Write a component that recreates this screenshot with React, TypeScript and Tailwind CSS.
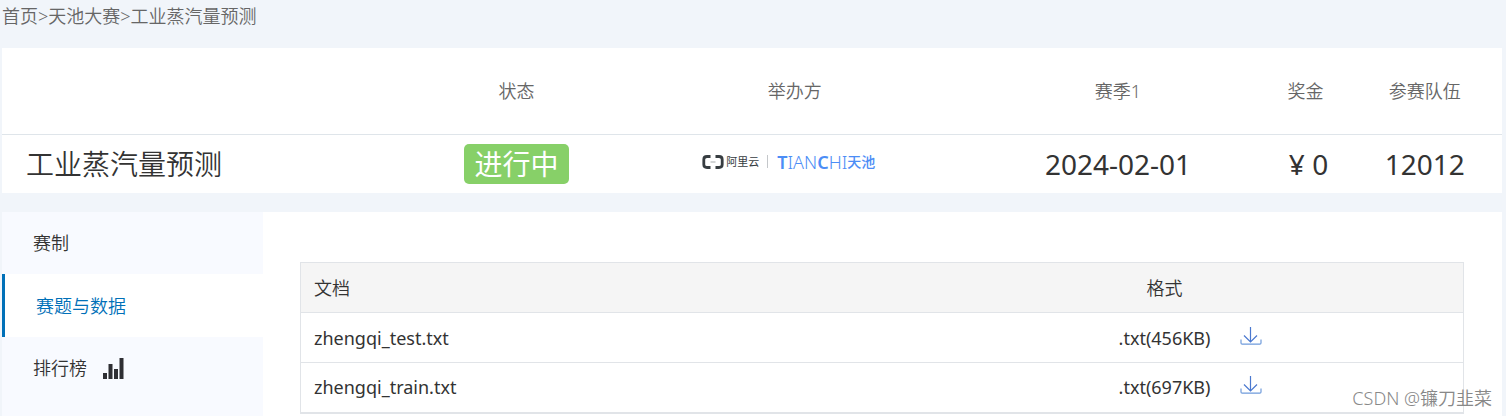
import React from "react";

const files = [
  { name: "zhengqi_test.txt", format: ".txt(456KB)" },
  { name: "zhengqi_train.txt", format: ".txt(697KB)" },
];

function BracketLogo() {
  return (
    <svg className="h-[14px] w-[22px]" viewBox="0 0 22 14" fill="none" aria-hidden="true">
      <path d="M8.500 1.500H5Q1.800 1.500 1.800 4.500V9.500Q1.800 12.500 5 12.500H8.500" stroke="#373d41" strokeWidth="2.8" />
      <path d="M13.500 1.500H17Q20.200 1.500 20.200 4.500V9.500Q20.200 12.500 17 12.500H13.500" stroke="#373d41" strokeWidth="2.8" />
      <path d="M8.500 7H13.500" stroke="#a5a9ab" strokeWidth="1" />
    </svg>
  );
}

function OrganizerLogo() {
  return (
    <div className="flex items-center justify-center whitespace-nowrap">
      <BracketLogo />
      <span className="ml-0.5 text-[11px] leading-4 text-[#373d41]">阿里云</span>
      <span className="mr-[9px] ml-2 h-[13px] w-px bg-[#c4c7ca]" />
      <span className="text-[18px] leading-4 font-light text-[#4c8df6]">
        <b className="font-semibold">T</b>IAN<b className="font-semibold">C</b>HI
      </span>
      <span className="text-[14px] leading-4 font-medium text-[#4c8df6]">天池</span>
    </div>
  );
}

function BarsIcon() {
  return (
    <svg className="h-[21px] w-[21px]" viewBox="0 0 21 21" fill="#2e2e33" aria-hidden="true">
      <path d="M0 15H4V21H0ZM5.500 6H9.500V21H5.500ZM11 11H15V21H11ZM16.500 0H20.500V21H16.500Z" />
    </svg>
  );
}

function DownloadIcon() {
  return (
    <svg className="h-[18px] w-[22px]" viewBox="0 0 22 18" fill="none" stroke="#4a78cf" aria-hidden="true">
      <path d="M10.500 0V15M4 8.500L10.500 15L17 8.500" strokeWidth="1.2" />
      <path d="M1 12.500V16Q1 17.200 2.200 17.200H19.800Q21 17.200 21 16V12.500" stroke="#6f9bdb" strokeWidth="1.2" />
    </svg>
  );
}

export default function App() {
  return (
    <div className="relative flex min-h-screen flex-col bg-[#f1f5fa] pr-1 pl-0.5 font-['Noto_Sans','Noto_Sans_CJK_SC',sans-serif] text-[18px] leading-6 text-[#333]">
      <nav aria-label="面包屑" className="flex h-12 items-start pt-1 font-[350] text-[#666]">
        <a href="#home">首页</a>
        <span>&gt;</span>
        <a href="#contests">天池大赛</a>
        <span>&gt;</span>
        <a href="#current">工业蒸汽量预测</a>
      </nav>

      <table className="w-full table-fixed bg-white text-center">
        <colgroup>
          <col className="w-[27.6%]" />
          <col className="w-[13.4%]" />
          <col className="w-[23.7%]" />
          <col className="w-[19.4%]" />
          <col className="w-[5.6%]" />
          <col className="w-[10.3%]" />
        </colgroup>
        <thead>
          <tr className="h-[86px] border-b border-[#dfe5ea] text-[#666]">
            <td />
            <th className="font-[350]">状态</th>
            <th className="font-[350]">举办方</th>
            <th className="font-[350]">赛季1</th>
            <th className="font-[350] whitespace-nowrap">奖金</th>
            <th className="font-[350]">参赛队伍</th>
          </tr>
        </thead>
        <tbody>
          <tr className="h-[59px] text-[28px] leading-10 whitespace-nowrap">
            <th className="pl-6 text-left font-[350]">工业蒸汽量预测</th>
            <td>
              <div className="flex justify-center">
                <span className="rounded-[5px] bg-[#87d068] px-[10px] text-white">进行中</span>
              </div>
            </td>
            <td className="pr-3 pb-1">
              <OrganizerLogo />
            </td>
            <td>2024-02-01</td>
            <td className="pl-1.5">¥ 0</td>
            <td>12012</td>
          </tr>
        </tbody>
      </table>

      <div className="mt-[19px] flex grow bg-white">
        <aside className="w-[261px] shrink-0 bg-[#f8faff]">
          <ul className="font-[350]">
            <li>
              <a href="#rules" className="flex h-[62px] items-center pl-[31px]">赛制</a>
            </li>
            <li>
              <a
                href="#data"
                aria-current="page"
                className="flex h-[63px] items-center border-l-[3px] border-[#0070b8] bg-white pl-[31px] text-[#0070b8]"
              >
                赛题与数据
              </a>
            </li>
            <li>
              <a href="#ranking" className="flex h-[62px] items-center gap-4 pl-[31px]">
                排行榜
                <BarsIcon />
              </a>
            </li>
          </ul>
        </aside>

        <main className="grow pt-[50px] pr-[38px] pl-[37px]">
          <table className="w-full table-fixed border-collapse border border-b-2 border-[#e1e4e8]">
            <colgroup>
              <col />
              <col className="w-[112px]" />
              <col className="w-[243px]" />
            </colgroup>
            <thead>
              <tr className="h-[50px] bg-[#f5f5f5]">
                <th className="pl-[13px] text-left font-[350]">文档</th>
                <th className="font-[350]">格式</th>
                <td />
              </tr>
            </thead>
            <tbody>
              {files.map((file) => (
                <tr key={file.name} className="h-[50px] border-t border-[#e1e4e8]">
                  <td className="pl-[13px]">{file.name}</td>
                  <td className="text-center">{file.format}</td>
                  <td className="pb-2 pl-[19px]">
                    <a href={"#" + file.name} aria-label={"下载 " + file.name} className="inline-block align-middle">
                      <DownloadIcon />
                    </a>
                  </td>
                </tr>
              ))}
            </tbody>
          </table>
        </main>
      </div>

      <span className="absolute right-[14px] bottom-1.5 font-[350] text-[#888]">CSDN @镰刀韭菜</span>
    </div>
  );
}
